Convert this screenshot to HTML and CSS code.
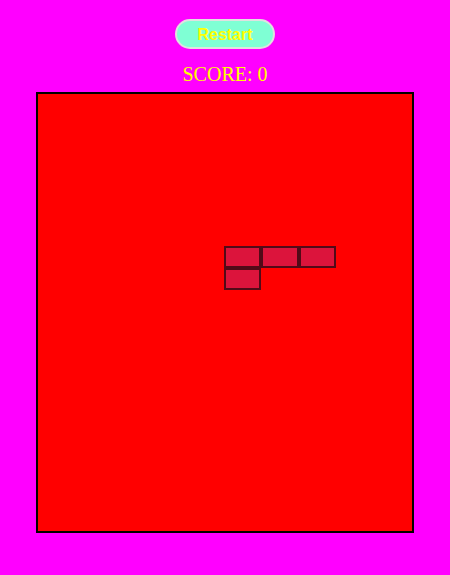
FILE: index.html
```html
<!DOCTYPE html>
<html>
<head>
<meta charset="utf-8">
<link rel="stylesheet" href="styles.css">
</head>
<body>
<div class="game">
  <button class="restart">Restart</button>
  <div class="score">SCORE: 0</div>
  <div class="board">
    <div class="cell" style="grid-row:8;grid-column:6"></div>
    <div class="cell" style="grid-row:8;grid-column:7"></div>
    <div class="cell" style="grid-row:8;grid-column:8"></div>
    <div class="cell" style="grid-row:9;grid-column:6"></div>
  </div>
</div>
</body>
</html>
```
FILE: styles.css
```css
html, body {
  margin: 0;
  padding: 0;
  background: #ff00ff;
}
.game {
  display: flex;
  flex-direction: column;
  align-items: center;
  padding-top: 19px;
}
.restart {
  width: 100px;
  height: 30px;
  box-sizing: border-box;
  background: #7fffd4;
  border: 2px solid #e0e0e0;
  border-radius: 15px;
  color: #ffff00;
  font-family: "Liberation Sans", Arial, sans-serif;
  font-weight: bold;
  font-size: 16px;
  padding: 2px 0 0 0;
  margin: 0;
}
.score {
  margin-top: 14px;
  font-family: "Liberation Serif", "Times New Roman", serif;
  font-size: 20px;
  line-height: 23px;
  color: #ffff00;
}
.board {
  margin-top: 6px;
  width: 374px;
  height: 437px;
  background: #ff0000;
  border: 2px solid #000;
  display: grid;
  grid-template-columns: repeat(10, 1fr);
  grid-template-rows: repeat(20, 1fr);
}
.cell {
  background: #dc143c;
  border: 2px solid #520a18;
  box-sizing: border-box;
  transform: translate(-1px, -1px);
}
```
